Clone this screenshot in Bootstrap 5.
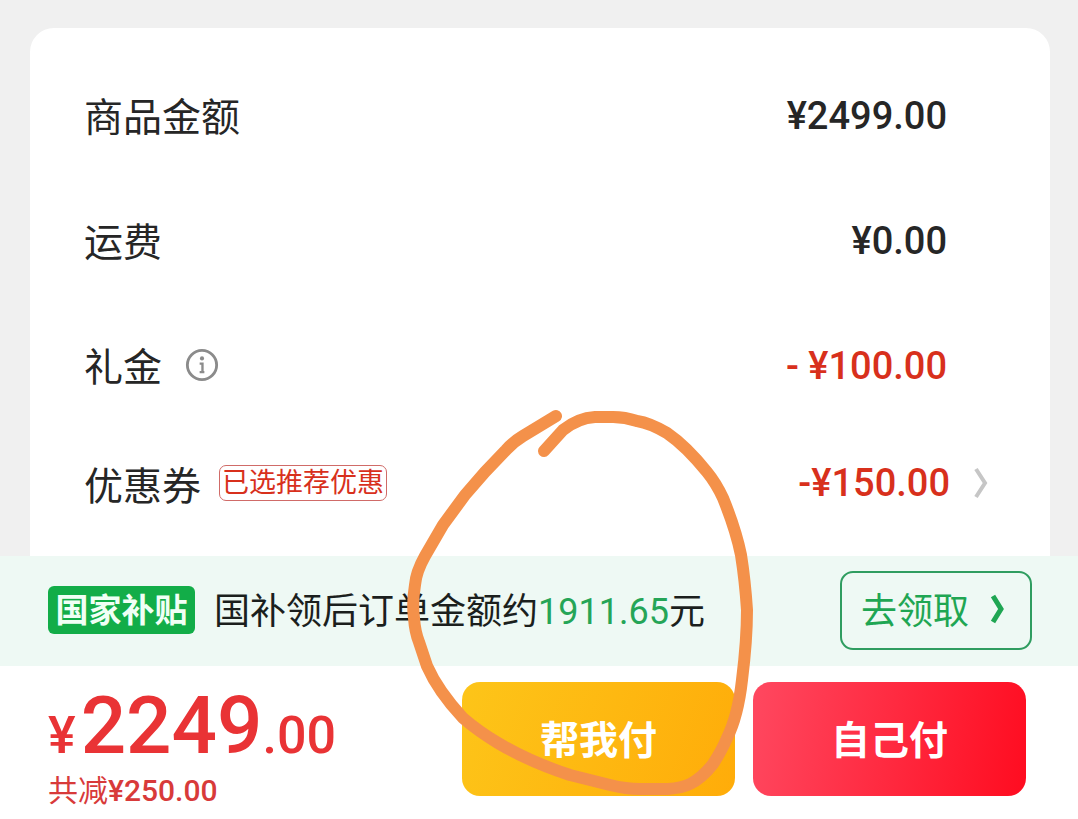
<!DOCTYPE html>
<html lang="zh-CN">
<head>
<meta charset="utf-8">
<meta name="viewport" content="width=device-width, initial-scale=1">
<title>订单结算</title>
<link href="https://cdn.jsdelivr.net/npm/bootstrap@5.3.0/dist/css/bootstrap.min.css" rel="stylesheet">
<style>
  body { background: #f0f0f0; color: #262626; font-family: Roboto, "Noto Sans CJK SC", sans-serif; }
  .page-shell { overflow: hidden; }
  .order-area { padding: 28px 28px 0 30px; }
  .order-card { border-radius: 24px 24px 0 0; padding-top: 25px; }
  .fee-row { height: 125px; padding: 0 103px 0 54px; font-size: 39px; line-height: 56px; }
  .fee-row.coupon { height: 110px; padding-right: 62px; }
  .fee-label { padding-top: 4px; }
  .coupon .fee-label { padding-top: 8px; }
  .fee-value { font-size: 38px; font-weight: 500; white-space: pre; }
  .cut { color: #d8301c; }
  .info-btn { width: 36px; height: 36px; margin-left: 22px; }
  .coupon-tag { border: 1px solid #d06b68; border-radius: 7px; padding: 0 2px; height: 36px; font-size: 27px; line-height: 34px; margin-left: 18px; color: #d8301c; }
  .arrow-gap { margin-left: 24px; }
  .subsidy-bar { background: #eef9f4; height: 110px; padding: 0 46px 2px 48px; font-size: 36px; color: #1b1f1d; }
  .subsidy-badge { background: #12ad48; color: #f0fff5; border-radius: 6px; height: 48px; width: 147px; font-size: 33px; line-height: 50px; font-weight: 700; }
  .subsidy-text { margin-left: 19px; padding-top: 4px; }
  .subsidy-sum { color: #25a557; }
  .claim-btn { width: 192px; height: 79px; border: 2px solid #2f9d60; border-radius: 13px; color: #1fa653; background: transparent; font-size: 36px; padding: 0 24px 0 19px; }
  .claim-label { padding-top: 4px; }
  .pay-bar { height: 153px; padding: 16px 52px 0 48px; }
  .total { color: #e93335; font-weight: 500; font-size: 52px; line-height: 88px; }
  .total-big { font-size: 80px; margin-left: 5px; }
  .saving { color: #d83a3a; font-size: 30px; line-height: 36px; margin-top: -7px; }
  .pay-btns { gap: 18px; }
  .pay-btn { width: 273px; height: 114px; border: 0; border-radius: 18px; color: #fff; font-size: 39px; font-weight: 700; padding: 4px 0 0; }
  .pay-friend { background: linear-gradient(110deg, #fdc519, #ffac09); }
  .pay-self { background: linear-gradient(100deg, #ff4860, #ff0c20); }
  .marker { left: 400px; top: 400px; pointer-events: none; }
</style>
</head>
<body>
<div class="page-shell position-relative d-flex flex-column min-vh-100">
  <main class="order-area flex-grow-1 d-flex">
    <section class="order-card bg-white flex-grow-1">
      <div class="fee-row d-flex align-items-center justify-content-between">
        <span class="fee-label">商品金额</span><span class="fee-value">¥2499.00</span>
      </div>
      <div class="fee-row d-flex align-items-center justify-content-between">
        <span class="fee-label">运费</span><span class="fee-value">¥0.00</span>
      </div>
      <div class="fee-row d-flex align-items-center justify-content-between">
        <div class="d-flex align-items-center">
          <span class="fee-label">礼金</span>
          <button type="button" class="info-btn btn p-0 border-0 d-flex" aria-label="礼金说明">
            <svg width="36" height="34" viewBox="0 0 36 36" fill="none" stroke="#8b8b8b"><circle cx="18" cy="18" r="15.500" stroke-width="3"/><circle cx="18" cy="11" r="2.200" fill="#8b8b8b" stroke="none"/><path d="M15.500 16.500h3v9M15.500 25.500h5" stroke-width="2.500"/></svg>
          </button>
        </div>
        <span class="fee-value cut">- ¥100.00</span>
      </div>
      <div class="fee-row coupon d-flex align-items-center justify-content-between">
        <div class="d-flex align-items-center"><span class="fee-label">优惠券</span><span class="coupon-tag">已选推荐优惠</span></div>
        <a href="#" class="fee-value cut text-decoration-none d-flex align-items-center">-¥150.00<svg class="arrow-gap" width="14" height="32" viewBox="0 0 14 32" fill="none" stroke="#c6c6c6" stroke-width="4"><path d="M2 2l9 14-9 14"/></svg></a>
      </div>
    </section>
  </main>
  <aside class="subsidy-bar d-flex align-items-center">
    <span class="subsidy-badge text-center">国家补贴</span>
    <span class="subsidy-text">国补领后订单金额约<span class="subsidy-sum">1911.65</span>元</span>
    <button type="button" class="claim-btn ms-auto d-flex align-items-center justify-content-between"><span class="claim-label">去领取</span><svg width="18" height="32" viewBox="0 0 18 32" fill="none" stroke="#1fa653" stroke-width="5"><path d="M5 2l8 13-8 13"/></svg></button>
  </aside>
  <footer class="pay-bar bg-white d-flex align-items-start">
    <div>
      <div class="total">¥<span class="total-big">2249</span>.00</div>
      <div class="saving">共减<span class="fw-medium">¥250.00</span></div>
    </div>
    <div class="pay-btns d-flex ms-auto">
      <button type="button" class="pay-btn pay-friend">帮我付</button>
      <button type="button" class="pay-btn pay-self">自己付</button>
    </div>
  </footer>
  <svg class="marker position-absolute" width="360" height="400" viewBox="400 400 360 400" fill="none" stroke="#f4914a" stroke-width="12" stroke-linecap="round" stroke-linejoin="round" aria-hidden="true"><path d="M556 416L523 436Q513 442 506 450Q484 472 465 495L443 525L425 556Q416 572 415 585Q412 603 414 618Q415 632 419 642L427 666Q438 691 463 718Q478 731 498 743Q530 762 570 775L610 785Q626 789 640 789H668Q682 788 690 784Q702 778 713 764Q722 750 727 738Q738 716 742 680Q747 640 747 610Q745 580 741 555Q736 530 723 498Q716 483 707 472Q686 446 667 433Q650 423 637 421Q625 417 613 417H595Q578 418 563 430L544 451"/></svg>
</div>
<script src="https://cdn.jsdelivr.net/npm/bootstrap@5.3.0/dist/js/bootstrap.bundle.min.js"></script>
</body>
</html>
